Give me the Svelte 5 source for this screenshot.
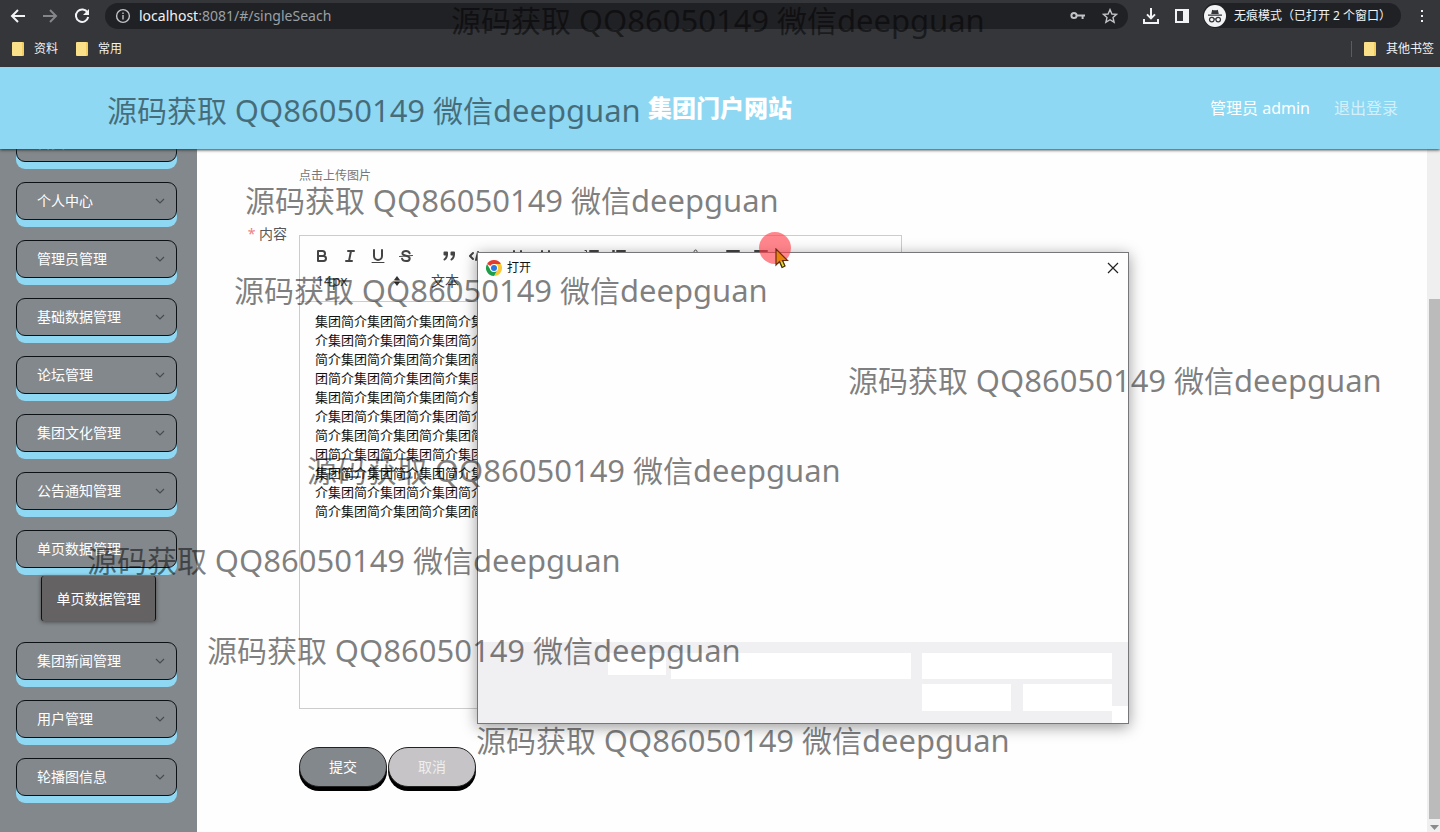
<script>
  const menu = [
    { label: '首页', arrow: false },
    { label: '个人中心', arrow: true },
    { label: '管理员管理', arrow: true },
    { label: '基础数据管理', arrow: true },
    { label: '论坛管理', arrow: true },
    { label: '集团文化管理', arrow: true },
    { label: '公告通知管理', arrow: true },
    { label: '单页数据管理', arrow: false, child: '单页数据管理' },
    { label: '集团新闻管理', arrow: true },
    { label: '用户管理', arrow: true },
    { label: '轮播图信息', arrow: true }
  ];

  const body = '集团简介'.repeat(119).slice(0, 473);

  // Editor toolbar, one array per button group; icons live in an 18x18 box.
  const groups = [
    [
      { name: '加粗', d: 'M5,4H9.5A2.5,2.5,0,0,1,9.5,9H5ZM5,9H10.5A2.5,2.5,0,0,1,10.5,14H5Z' },
      { name: '斜体', d: 'M7,4H13M5,14H11M8,14L10,4' },
      { name: '下划线', d: 'M5,3V9A4,4,0,0,0,13,9V3', thin: 'M3,15.5H15' },
      {
        name: '删除线',
        d: 'M12.6,6.3C12.2,4.8,10.8,4,9,4C6.9,4,5.4,5,5.4,6.5C5.4,7.7,6.6,8.2,9,8.7C11.6,9.3,12.7,10,12.7,11.4C12.7,13,11.2,14,9,14C7,14,5.5,13.2,5.1,11.7',
        thin: 'M2.5,9.5L15.5,8.5'
      }
    ],
    [
      { name: '引用', d: 'M4.5,5.5H7V7.5H4.5ZM11.5,5.5H14V7.5H11.5ZM7,7C7,11,4.5,12.5,4.5,12.5M14,7C14,11,11.5,12.5,11.5,12.5' },
      { name: '代码', d: 'M5,6L2,9L5,12M13,6L16,9L13,12M10,5L8,13' }
    ],
    [
      { name: '标题一', d: 'M3,4V14M10,4V14M3,9H10M14,8V14' },
      { name: '标题二', d: 'M3,4V14M10,4V14M3,9H10M13,8H15V11H13V14H16' }
    ],
    [
      { name: '有序列表', d: 'M8,4H16M8,9H16M8,14H16', thin: 'M3,3.5H4.5V7M2.5,10.5H5V12.5H2.5V14.5H5' },
      { name: '无序列表', d: 'M7,4H15M7,9H15M7,14H15M3,4H4M3,9H4M3,14H4' }
    ],
    [
      { name: '下标', d: 'M3,6L10,14M10,6L3,14', thin: 'M13,12H15V14H13V16H16' },
      { name: '上标', d: 'M3,6L10,14M10,6L3,14', thin: 'M13,4.5C13,2.5,16,2.5,16,4.5L13,7.5H16' }
    ],
    [
      { name: '减少缩进', d: 'M3,4H15M3,14H15M9,9H15M5,7L3,9L5,11' },
      { name: '增加缩进', d: 'M3,4H15M3,14H15M9,9H15M3,7L5,9L3,11' }
    ]
  ];

  const marks = [
    [451, 0], [107, 90], [245, 180], [234, 270], [848, 360],
    [307, 450], [87, 540], [207, 630], [476, 720]
  ];
</script>

<div class="window">
  <header class="chrome">
    <div class="bar">
      <button class="nav" aria-label="后退">
        <svg width="18" height="18" viewBox="0 0 18 18"><path d="M16 9H3M9 3L3 9L9 15" /></svg>
      </button>
      <button class="nav off" aria-label="前进">
        <svg width="18" height="18" viewBox="0 0 18 18"><path d="M2 9H15M9 3L15 9L9 15" /></svg>
      </button>
      <button class="nav" aria-label="刷新">
        <svg width="18" height="18" viewBox="0 0 18 18"><path d="M14.5 5.6A6.2 6.2 0 1 0 15.2 10" /><path class="solid" d="M16 2V8H10Z" /></svg>
      </button>
      <div class="address">
        <svg width="16" height="16" viewBox="0 0 16 16"><circle cx="8" cy="8" r="6.4" /><path d="M8 7V11.5M8 4.4V6" /></svg>
        <span class="url"><b>localhost</b>:8081/#/singleSeach</span>
        <svg width="16" height="16" viewBox="0 0 16 16"><circle cx="4" cy="7.5" r="2.6" class="thick" /><path class="thick" d="M6.6 7.5H15M12.6 7.5V11" /></svg>
        <svg width="16" height="16" viewBox="0 0 16 16"><path d="M8 1.6L9.9 6L14.6 6.4L11 9.5L12.1 14.2L8 11.7L3.9 14.2L5 9.5L1.4 6.4L6.1 6Z" /></svg>
      </div>
      <button class="nav" aria-label="下载">
        <svg width="18" height="18" viewBox="0 0 18 18"><path d="M9 1V11M5 7.4L9 11.4L13 7.4M2 12V16H16V12" /></svg>
      </button>
      <button class="nav panel" aria-label="侧边栏">
        <svg width="16" height="16" viewBox="0 0 16 16"><path d="M2 2H14V14H2Z" /><path class="solid" d="M9 2H14V14H9Z" /></svg>
      </button>
      <div class="incognito">
        <svg width="22" height="22" viewBox="0 0 22 22">
          <circle cx="11" cy="11" r="11" fill="#f1f3f4" />
          <path d="M7.2 9L8.2 4.8Q11 5.8 13.8 4.8L14.8 9ZM4 9.6H18V10.8H4Z" fill="#35363a" />
          <g fill="none" stroke="#35363a" stroke-width="1.2"><circle cx="7.8" cy="14.6" r="2.3" /><circle cx="14.2" cy="14.6" r="2.3" /><path d="M10 14.2Q11 13.6 12 14.2" /></g>
        </svg>
        <span>无痕模式（已打开 2 个窗口）</span>
      </div>
      <button class="nav dots" aria-label="菜单">
        <svg width="18" height="18" viewBox="0 0 18 18"><path class="solid" d="M8 3H10V5H8ZM8 8H10V10H8ZM8 13H10V15H8Z" /></svg>
      </button>
    </div>
    <nav class="bookmarks">
      <a href="#/a"><i></i>资料</a>
      <a href="#/b"><i></i>常用</a>
      <a href="#/c" class="other"><i></i>其他书签</a>
    </nav>
  </header>

  <header class="site">
    <h1>集团门户网站</h1>
    <div class="user"><span>管理员 admin</span><a href="#/logout">退出登录</a></div>
  </header>

  <div class="page">
    <aside>
      <ul>
        {#each menu as item}
          <li>
            <button class="item">
              {item.label}
              {#if item.arrow}
                <svg width="10" height="6" viewBox="0 0 10 6"><path d="M1 1L5 5L9 1" /></svg>
              {/if}
            </button>
            {#if item.child}<a class="child" href="#/singleSeach">{item.child}</a>{/if}
          </li>
        {/each}
      </ul>
    </aside>

    <main>
      <p class="tip">点击上传图片</p>
      <div class="field">
        <span class="label"><em>*</em> 内容</span>
        <div class="editor">
          <div class="toolbar">
            <div class="tools">
              {#each groups as group}
                <div class="group">
                  {#each group as tool}
                    <button aria-label={tool.name}>
                      <svg width="18" height="18" viewBox="0 0 18 18">
                        <path d={tool.d} />
                        {#if tool.thin}<path class="thin" d={tool.thin} />{/if}
                      </svg>
                    </button>
                  {/each}
                </div>
              {/each}
            </div>
            <div class="pickers">
              <button class="size">14px
                <svg width="8" height="12" viewBox="0 0 8 12"><path d="M1 5L4 1L7 5ZM1 7L4 11L7 7Z" /></svg>
              </button>
              <button>文本</button>
            </div>
          </div>
          <div class="content" contenteditable="true" role="textbox" aria-label="内容" tabindex="0" spellcheck="false">{body}</div>
        </div>
      </div>
      <div class="actions">
        <button>提交</button>
        <button class="cancel">取消</button>
      </div>
    </main>

    <div class="scroll">
      <div class="thumb"></div>
      <svg width="9" height="6" viewBox="0 0 9 6"><path d="M0 0H9L4.5 5Z" fill="#8b8b8b" /></svg>
    </div>
  </div>

  <section class="dialog" role="dialog" aria-label="打开">
    <div class="caption">
      <svg width="16" height="16" viewBox="0 0 16 16">
        <path d="M8 8L1.07 4A8 8 0 0 1 14.93 4Z" fill="#e33b2e" />
        <path d="M8 8V4H14.93A8 8 0 0 1 8 16L11.46 10Z" fill="#fcc934" />
        <path d="M8 8L11.46 10L8 16A8 8 0 0 1 1.07 4L4.54 10Z" fill="#1e9e4a" />
        <circle cx="8" cy="8" r="4" fill="#fff" /><circle cx="8" cy="8" r="3" fill="#2a78e4" />
      </svg>
      <span>打开</span>
      <button aria-label="关闭"><svg width="12" height="12" viewBox="0 0 12 12"><path d="M1 1L11 11M11 1L1 11" /></svg></button>
    </div>
    <div class="files"></div>
    <div class="foot">
      <div class="name"></div>
      <input aria-label="文件名" />
      <div class="right">
        <select aria-label="文件类型"></select>
        <div class="pair"><button aria-label="打开"></button><button aria-label="取消"></button></div>
      </div>
      <div class="grip"></div>
    </div>
  </section>

  <div class="halo"></div>
  <svg class="cursor" width="14" height="22" viewBox="0 0 14 22">
    <path d="M1 1V17L4.5 13.5L7 19.5L10 18L7.5 12.5H12.5Z" fill="#e8830c" stroke="#6b2a10" stroke-width="1.2" />
    <path d="M5 14L7.2 19.3L9.8 18L7.6 13" fill="#e3d42c" stroke="#3a3310" />
  </svg>

  {#each marks as [x, y]}
    <div class="mark" style="left: {x}px; top: {y}px">源码获取 <span>QQ86050149</span> 微信<span>deepguan</span></div>
  {/each}
</div>

<style>
  :global(body) { margin: 0; }
  * { box-sizing: border-box; }
  .window {
    position: relative;
    display: flex;
    flex-direction: column;
    height: 100vh;
    overflow: hidden;
    background: #fefefe;
    font: 14px/20px "Noto Sans", "Noto Sans CJK SC", sans-serif;
    color: #222;
  }
  button, input, select { font: inherit; color: inherit; border: 0; padding: 0; margin: 0; background: none; border-radius: 0; }
  a { color: inherit; text-decoration: none; }

  .chrome { background: #35363a; color: #f1f3f4; flex: none; font-size: 12px; padding-bottom: 7px; }
  .bar { display: flex; align-items: center; height: 31px; padding: 0 9px; }
  .nav { width: 18px; height: 18px; margin-right: 14px; }
  .nav svg, .address svg, .incognito svg { display: block; }
  .nav path, .address path, .address circle { fill: none; stroke: #f1f3f4; stroke-width: 2; }
  .nav .solid { fill: #f1f3f4; stroke: none; }
  .off path { stroke: #85868a; }
  .address {
    flex: 1;
    display: flex;
    align-items: center;
    gap: 16px;
    height: 26px;
    margin: 0 14px 0 0;
    padding: 0 10px;
    border-radius: 13px;
    background: #202124;
    font-size: 14px;
    color: #9aa0a6;
  }
  .address path, .address circle { stroke: #c0c3c7; stroke-width: 1.4; }
  .address .thick { stroke-width: 2; }
  .url { flex: 1; margin-left: -8px; }
  .url b { font-weight: 400; color: #f1f3f4; }
  .panel { width: 16px; margin-right: 13px; }
  .incognito {
    display: flex;
    align-items: center;
    gap: 8px;
    width: 198px;
    height: 25px;
    border-radius: 13px;
    background: #202124;
    white-space: nowrap;
    padding-left: 1px;
  }
  .dots { margin: 0 0 0 12px; }
  .bookmarks { display: flex; height: 29px; align-items: center; gap: 18px; padding: 6px 6px 0 12px; }
  .bookmarks a { display: flex; align-items: center; gap: 10px; }
  .bookmarks i { width: 12px; height: 14px; background: #fbe08a; border-right: 2px solid #f2cf63; border-radius: 1px; }
  .other { margin-left: auto; padding-left: 12px; border-left: 1px solid #5b5c60; height: 16px; }

  .site {
    position: relative;
    z-index: 1;
    flex: none;
    display: grid;
    grid-template-columns: 1fr auto 1fr;
    align-items: center;
    height: 82px;
    padding: 0 42px;
    background: #8ed8f3;
    color: #fff;
    box-shadow: 0 1px 3px #333;
  }
  h1 { grid-column: 2; margin: 0; font-size: 24px; font-weight: 900; line-height: 32px; }
  .user { justify-self: end; display: flex; gap: 24px; font-size: 16px; }
  .user a { color: #d3f0fa; }

  .page { flex: 1; min-height: 0; display: flex; }
  aside { flex: none; width: 197px; padding: 0 20px 0 16px; background: #83888c; overflow: hidden; }
  ul { list-style: none; margin: -25px 0 0; padding: 0; }
  li { margin-bottom: 20px; }
  .item {
    display: flex;
    align-items: center;
    justify-content: space-between;
    width: 100%;
    height: 38px;
    padding: 0 11px 0 20px;
    border: 1px solid #0c1116;
    border-radius: 9px;
    background: #83888c;
    box-shadow: 0 7px #8ed8f3;
    color: #fff;
  }
  .item path { fill: none; stroke: #484c50; stroke-width: 1.2; }
  .child {
    display: block;
    width: 115px;
    margin: 8px 0 21px 25px;
    padding: 13px 0 12px;
    border: solid #111;
    border-width: 0 1px;
    border-radius: 3px;
    background: #646263;
    box-shadow: 0 1px 4px #444;
    color: #fff;
    text-align: center;
  }

  main { flex: 1; padding: 17px 24px 0 48px; }
  .tip { margin: 0 0 49px 54px; font-size: 12px; color: #74777b; }
  .field { display: grid; grid-template-columns: 42px minmax(0, 603px); gap: 12px; }
  .label { color: #55575b; text-align: right; margin: -11px 0 0 -12px; white-space: nowrap; }
  .label em { color: #ee8080; font-style: normal; }
  .editor { border: 1px solid #ccc; }
  .toolbar { display: grid; gap: 1px; padding: 8px; border-bottom: 1px solid #ccc; }
  .tools, .group, .pickers { display: flex; }
  .group { margin-right: 15px; }
  .group button { width: 28px; height: 24px; padding: 3px 5px; }
  .group svg { display: block; }
  .group path { fill: none; stroke: #444; stroke-width: 2; stroke-linecap: round; stroke-linejoin: round; }
  .group .thin { stroke-width: 1; }
  .pickers { gap: 30px; }
  .pickers button { display: flex; justify-content: space-between; align-items: center; height: 24px; color: #444; }
  .size { width: 93px; padding-left: 8px; }
  .size path { fill: #333; }
  .content { height: 406px; padding: 10px 15px; font-size: 13px; line-height: 19px; color: #111; outline: 0; }
  .actions { display: flex; gap: 1px; margin: 38px 0 0 54px; }
  .actions button {
    width: 88px;
    height: 40px;
    border: 1px solid #222;
    border-radius: 20px;
    background: #83888c;
    box-shadow: 0 4px #000;
    color: #fff;
  }
  .actions .cancel { background: #c6c4c6; color: #eee; }

  .scroll { flex: none; display: flex; flex-direction: column; width: 13px; padding: 150px 0 1px 2px; background: #f0eff0; align-items: center; gap: 6px; }
  .thumb { flex: 1; width: 100%; background: #bcbbbc; }

  .dialog {
    position: absolute;
    left: 477px;
    top: 252px;
    width: 652px;
    height: 472px;
    display: flex;
    flex-direction: column;
    border: 1px solid #77767a;
    background: #fefefe;
    box-shadow: 0 3px 14px rgba(0, 0, 0, 0.4);
  }
  .caption { display: flex; align-items: center; gap: 5px; height: 30px; padding: 0 9px 0 8px; font-size: 12px; color: #111; }
  .caption button { margin-left: auto; width: 12px; height: 12px; }
  .caption button svg { display: block; }
  .caption button path { stroke: #222; stroke-width: 1.2; }
  .files { flex: 1; }
  .foot { position: relative; display: flex; align-items: flex-start; height: 81px; padding: 11px 16px 0 130px; background: #f0eff1; }
  .name { width: 58px; height: 22px; margin-right: 5px; background: #fff; }
  .foot input { flex: 1; min-width: 0; height: 26px; margin-right: 11px; background: #fff; }
  .right { width: 190px; display: grid; gap: 5px; }
  .right select { appearance: none; height: 26px; background: #fff; }
  .pair { display: flex; gap: 12px; }
  .pair button { flex: 1; height: 27px; background: #fff; }
  .grip { position: absolute; right: 0; bottom: 0; width: 16px; height: 17px; background: #fff; }

  .halo { position: absolute; left: 759px; top: 232px; width: 32px; height: 32px; border-radius: 50%; background: rgba(255, 60, 70, 0.62); }
  .cursor { position: absolute; left: 775px; top: 248px; }
  .mark { position: absolute; z-index: 2; white-space: pre; font-size: 30px; line-height: 40px; color: rgba(0, 0, 0, 0.5); pointer-events: none; }
  .mark span { font-size: 31px; }
</style>
